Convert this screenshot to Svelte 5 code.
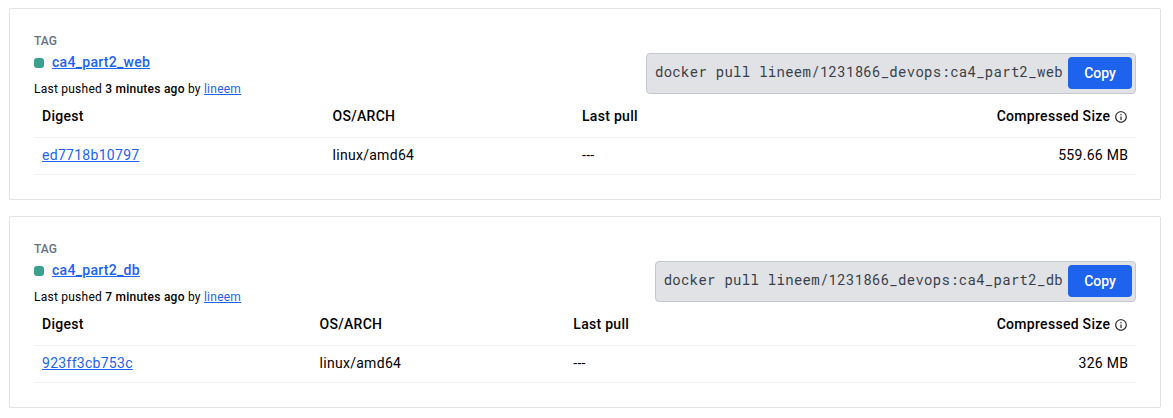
<script>
  const tags = [
    { name: 'ca4_part2_web', ago: '3 minutes ago', digest: 'ed7718b10797', size: '559.66 MB', variant: 'web' },
    { name: 'ca4_part2_db', ago: '7 minutes ago', digest: '923ff3cb753c', size: '326 MB', variant: 'db' }
  ];
</script>

<main>
  {#each tags as tag}
    <section class="card">
      <header>
        <div class="info">
          <div class="label">TAG</div>
          <div class="name"><span class="status"></span><a href="#tag">{tag.name}</a></div>
          <div class="pushed">Last pushed <b>{tag.ago}</b> by <a href="#user">lineem</a></div>
        </div>
        <div class="command">
          <code>docker pull lineem/1231866_devops:{tag.name}</code>
          <button>Copy</button>
        </div>
      </header>
      <div class="table {tag.variant}">
        <div class="row head">
          <span>Digest</span><span>OS/ARCH</span><span>Last pull</span>
          <span class="size">Compressed Size
            <svg width="14" height="14" viewBox="0 0 24 24" fill="currentColor"><path d="M11 7h2v2h-2zm0 4h2v6h-2zm1-9C6.48 2 2 6.48 2 12s4.48 10 10 10 10-4.48 10-10S17.52 2 12 2zm0 18c-4.41 0-8-3.59-8-8s3.59-8 8-8 8 3.59 8 8-3.59 8-8 8z" /></svg>
          </span>
        </div>
        <div class="row">
          <a href="#digest">{tag.digest}</a><span>linux/amd64</span><span>---</span><span class="size">{tag.size}</span>
        </div>
      </div>
    </section>
  {/each}
</main>

<style>
  :global(body) { background: #fff; }
  main {
    box-sizing: border-box;
    width: 1173px;
    height: 418px;
    padding: 8px 12px 0 9px;
    display: flex;
    flex-direction: column;
    gap: 16px;
    font: 14px/20px Roboto, sans-serif;
    letter-spacing: 0.29px;
    color: #000;
  }
  .card {
    box-sizing: border-box;
    height: 192px;
    padding: 23px 24px 0;
    border: 1px solid #e1e2e6;
    border-radius: 2px;
  }
  a { color: #1d63ed; text-decoration: underline; }
  header { display: flex; justify-content: space-between; height: 66px; }
  .label { font-size: 12px; line-height: 18px; font-weight: 500; letter-spacing: 0; color: #677285; }
  .name { display: flex; align-items: center; gap: 8px; height: 24px; font-weight: 500; }
  .status { width: 10px; height: 10px; margin-top: 2px; border-radius: 3px; background: #3ba08d; }
  .pushed { margin-top: 5px; font-size: 12px; line-height: 20px; letter-spacing: 0.24px; }
  b { font-weight: 500; }
  .command {
    box-sizing: border-box;
    display: flex;
    align-items: center;
    gap: 5px;
    height: 41px;
    margin-top: 21px;
    padding: 0 3px 2px 8px;
    border: 1px solid #c4c8d1;
    border-radius: 4px;
    background: #e1e2e6;
  }
  code { padding-bottom: 1px; font: 14px/20px "Roboto Mono", "DejaVu Sans Mono", monospace; letter-spacing: 0.28px; color: #393f49; }
  button {
    width: 64px;
    height: 32px;
    border: 0;
    border-radius: 4px;
    background: #1d63ed;
    color: #fff;
    font: 500 14px Roboto, sans-serif;
    letter-spacing: 0;
  }
  .row {
    box-sizing: border-box;
    display: grid;
    align-items: center;
    height: 37px;
    padding: 0 8px 2px;
    border-bottom: 1px solid #f1f1f3;
  }
  .web .row { grid-template-columns: 290.5px 249.5px 1fr auto; }
  .db .row { grid-template-columns: 277.5px 253.8px 1fr auto; }
  .head { height: 40px; padding-bottom: 4px; font-weight: 500; }
  .size { display: flex; align-items: center; gap: 4px; margin-right: -0.28px; }
  svg { margin-top: 2px; color: #222; }
</style>
